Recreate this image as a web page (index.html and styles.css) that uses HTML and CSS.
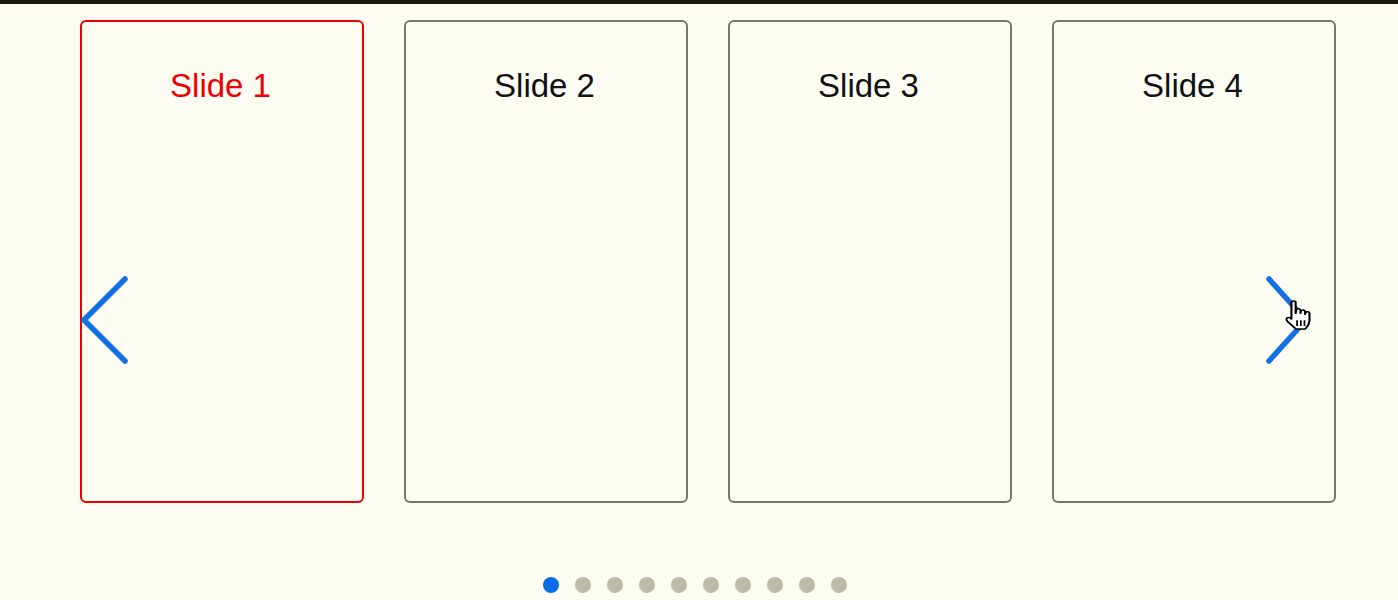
FILE: index.html
```html
<!DOCTYPE html>
<html lang="en">

<head>
    <meta charset="UTF-8" />
    <meta name="viewport" content="width=device-width, initial-scale=1.0" />
    <title>Slider</title>
    <link rel="stylesheet" href="styles.css">
</head>

<body>
    <div class="topbar"></div>
    <div class="slider">
        <div class="track">
            <div class="slide active">Slide 1</div>
            <div class="slide">Slide 2</div>
            <div class="slide">Slide 3</div>
            <div class="slide">Slide 4</div>
        </div>

        <svg class="arrow arrow-prev" width="56" height="96" viewBox="0 0 56 96">
            <polyline points="44,7 3,48 44,89" />
        </svg>
        <svg class="arrow arrow-next" width="56" height="96" viewBox="0 0 56 96">
            <polyline points="8,7 45,48 8,89" />
        </svg>

        <svg class="cursor" width="29" height="33" viewBox="3 1.5 18 28.5" preserveAspectRatio="none">
            <path d="M7 3.5c0-1.4 2.6-1.4 2.6 0v9.5l.4-3c.4-1.4 2.6-1.2 2.6.3v2.7l.3-2c.4-1.3 2.5-1.1 2.5.4v2.4l.4-1.4c.5-1.2 2.4-.9 2.4.6v6c0 3.5-1.6 6-2.6 7.5H9.8L4.6 20c-1.2-1.5-.9-3.3.6-3.3.8 0 1.3.6 1.8 1.2V3.5z" />
            <line x1="10.5" y1="19" x2="10.5" y2="24" />
            <line x1="12.8" y1="19" x2="12.8" y2="24" />
            <line x1="15.1" y1="19" x2="15.1" y2="24" />
        </svg>

        <div class="dots">
            <span class="dot on"></span>
            <span class="dot"></span>
            <span class="dot"></span>
            <span class="dot"></span>
            <span class="dot"></span>
            <span class="dot"></span>
            <span class="dot"></span>
            <span class="dot"></span>
            <span class="dot"></span>
            <span class="dot"></span>
        </div>
    </div>
</body>

</html>
```

FILE: styles.css
```css
body {
    margin: 0;
    background-color: #fcfcf3;
    font-family: "Liberation Sans", Arial, sans-serif;
    color: #111;
    overflow: hidden;
}

.topbar {
    height: 4px;
    background-color: #1c1a10;
}

.slider {
    position: relative;
    padding: 16px 0 0 80px;
}

.track {
    display: flex;
    gap: 40px;
}

.slide {
    box-sizing: border-box;
    width: 284px;
    height: 483px;
    border: 2px solid #77776a;
    border-radius: 6px;
    text-align: center;
    padding-top: 45px;
    padding-right: 3px;
    font-size: 33px;
}

.slide.active {
    border-color: #ee0000;
    color: #ee0000;
}

.arrow {
    position: absolute;
    top: 268px;
}

.arrow polyline {
    fill: none;
    stroke: #1170e4;
    stroke-width: 5.5;
    stroke-linecap: round;
    stroke-linejoin: round;
}

.arrow-prev {
    left: 81px;
}

.arrow-next {
    left: 1261px;
}

.cursor {
    position: absolute;
    left: 1285px;
    top: 296px;
}

.cursor path {
    fill: #fff;
    stroke: #000;
    stroke-width: 1.3;
    stroke-linejoin: round;
}

.cursor line {
    stroke: #000;
    stroke-width: 1.1;
}

.dots {
    display: flex;
    justify-content: center;
    gap: 16px;
    margin: 74px 0 0 -89px;
}

.dot {
    width: 16px;
    height: 16px;
    border-radius: 50%;
    background-color: #bdbcab;
}

.dot.on {
    background-color: #0b6ce8;
}
```
